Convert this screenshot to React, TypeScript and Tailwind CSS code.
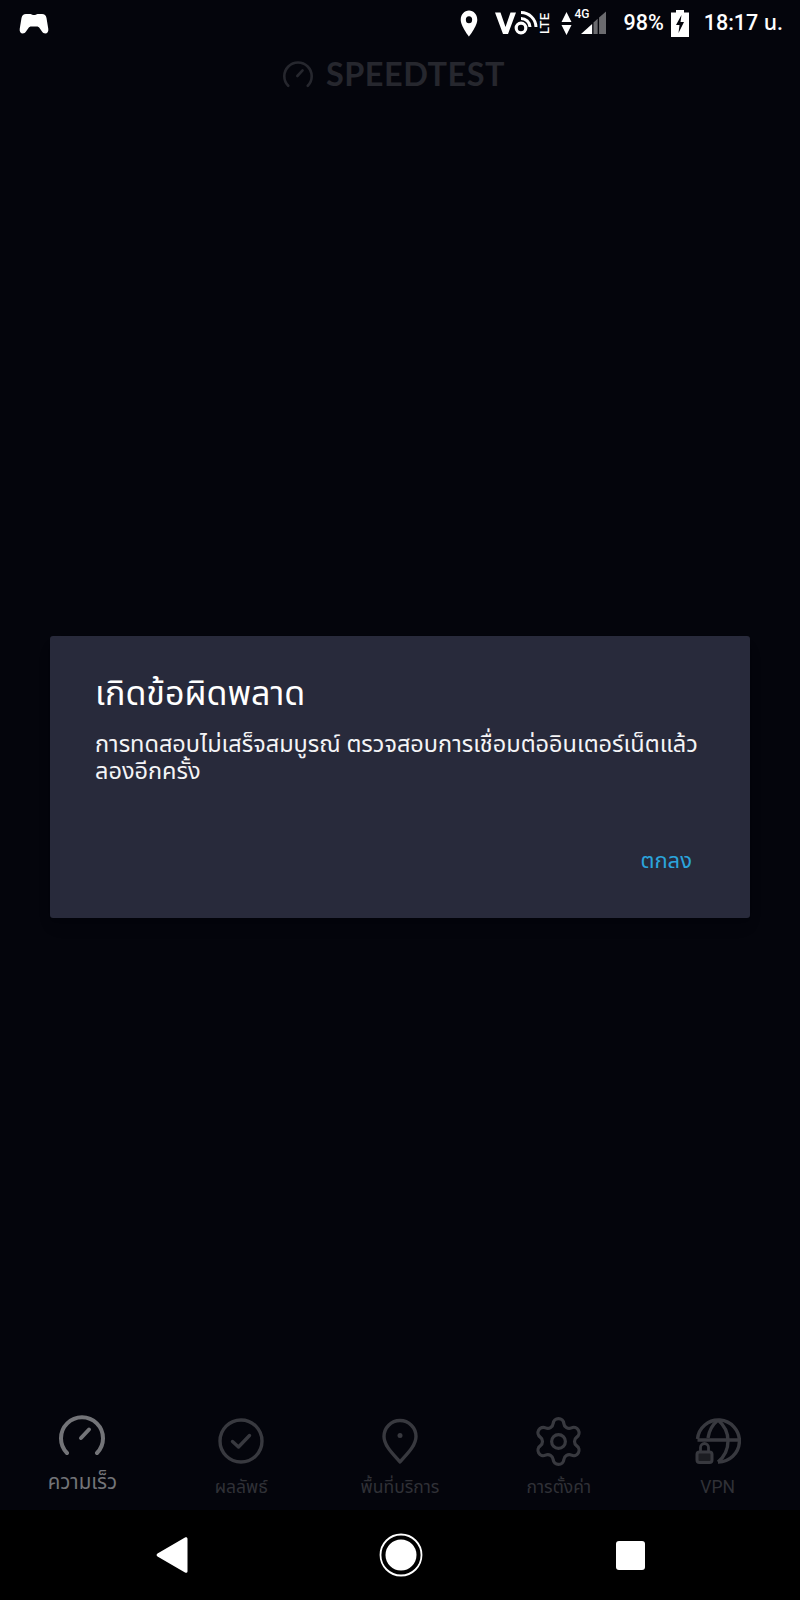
import { Settings } from "lucide-react";

// ===== Speedtest error dialog screen =====
const FONT = "font-['Roboto','Noto_Sans','Noto_Sans_Thai','DejaVu_Sans',sans-serif]";

function GamepadIcon() {
  return (
    <svg width="30" height="21" viewBox="0 0 30 21" fill="#fff">
      <path d="M7 1h4.500c1 0 1.500 1 2.500 1h2c1 0 1.500-1 2.500-1H23c2.500 0 4 1.500 4.500 4l1.800 11c.4 2.500-1 4.500-3 4.500-1.500 0-2.500-.8-3.500-2.200L20.500 15c-.7-1-1.500-1.500-2.800-1.500h-5.400c-1.300 0-2.100.5-2.800 1.500l-2.300 3.300c-1 1.400-2 2.200-3.500 2.200-2 0-3.400-2-3-4.500L2.500 5C3 2.500 4.500 1 7 1z" />
    </svg>
  );
}

function StatusIcons() {
  return (
    <>
      {/* Location pin */}
      <svg width="18" height="27" viewBox="0 0 20 27" preserveAspectRatio="none" className="mr-[17px]">
        <path
          fillRule="evenodd"
          fill="#fff"
          d="M10 0.500C4.800 0.500 0.800 4.500 0.800 9.700 0.800 16 10 26.500 10 26.500S19.200 16 19.200 9.700C19.200 4.500 15.200 0.500 10 0.500zM10 6.200a3.500 3.500 0 1 1 0 7 3.500 3.500 0 0 1 0-7z"
        />
      </svg>

      {/* VoLTE */}
      <svg width="60" height="30" viewBox="0 -3 60 30" className="mr-[6px]">
        <path d="M0 1.500h5.500L10.500 16l5-14.500H21L13 23H8z" fill="#fff" />
        <circle cx="26" cy="17" r="4.800" fill="none" stroke="#fff" strokeWidth="3.200" />
        <path
          d="M26 1.500A15 15 0 0 1 41 16M26 7.500A9 9 0 0 1 35 16"
          fill="none"
          stroke="#fff"
          strokeWidth="3"
        />
        <text
          transform="translate(54 23) rotate(-90)"
          fontSize="13"
          fontWeight="500"
          fill="#fff"
          textLength="21"
        >
          LTE
        </text>
      </svg>

      {/* Data arrows */}
      <svg width="11" height="25" viewBox="0 0 11 25" className="mr-[9px]">
        <path d="M5.500 1L10.500 11H0.500z M0.500 14H10.500L5.500 24z" fill="#fff" />
      </svg>

      {/* Signal with 4G */}
      <div className="relative mr-[17px] h-[26px] w-[25px]">
        <svg width="25" height="26" viewBox="0 0 27 26" className="absolute left-0 top-0">
          <path d="M0 25L12 14V25z" fill="#fff" />
          <path d="M13.500 12.500L18 8.500V25H13.500z" fill="#6b6b6f" />
          <path d="M19.500 7L27 0.500V25H19.500z" fill="#6b6b6f" />
        </svg>
        <span className="absolute left-[-7px] top-[-2px] text-[12px] font-medium leading-none text-white">
          4G
        </span>
      </div>

      <span className="mr-[7px] text-[21.5px] font-medium leading-none text-white">98%</span>

      {/* Battery charging */}
      <svg width="18" height="27" viewBox="0 0 18 27" className="mr-[15px]">
        <path
          fillRule="evenodd"
          fill="#fff"
          d="M5 0h8v2.500h5V27H0V2.500h5zM10.500 5L5 15h3.500L7.500 23l5.500-11H9.500z"
        />
      </svg>

      <span className="text-[21.5px] font-medium leading-none text-white">18:17 น.</span>
    </>
  );
}

function SpeedIcon({ size, stroke }: { size: number; stroke: string }) {
  return (
    <svg
      width={size}
      height={(size * 42) / 46}
      viewBox="0 0 46 42"
      fill="none"
      stroke={stroke}
      strokeWidth="4"
      strokeLinecap="round"
    >
      <path d="M8 38A21 21 0 1 1 38 38" />
      <path d="M22 23L30 14.500" />
    </svg>
  );
}

const TAB_STROKE = "#38393f";

const tabs = [
  {
    label: "ความเร็ว",
    active: true,
    icon: <SpeedIcon size={46} stroke="#737478" />,
  },
  {
    label: "ผลลัพธ์",
    active: false,
    icon: (
      <svg width="46" height="46" viewBox="0 0 46 46" fill="none" stroke={TAB_STROKE} strokeWidth="3.400" strokeLinecap="round" strokeLinejoin="round">
        <circle cx="23" cy="23" r="21" />
        <path d="M14.500 23.500L20.500 29L31.500 17.500" />
      </svg>
    ),
  },
  {
    label: "พื้นที่บริการ",
    active: false,
    icon: (
      <svg width="36" height="46" viewBox="0 0 36 46" fill="none" stroke={TAB_STROKE} strokeWidth="3.400" strokeLinejoin="round">
        <path d="M18 44C12 37 2 28 2 18.500a16 16 0 0 1 32 0C34 28 24 37 18 44z" />
        <circle cx="18" cy="17.500" r="2.500" fill={TAB_STROKE} stroke="none" />
      </svg>
    ),
  },
  {
    label: "การตั้งค่า",
    active: false,
    icon: <Settings size={55} color={TAB_STROKE} strokeWidth={1.4} />,
  },
  {
    label: "VPN",
    active: false,
    icon: (
      <svg width="46" height="46" viewBox="0 0 46 46" fill="none" stroke={TAB_STROKE} strokeWidth="3.400" strokeLinejoin="round">
        <path d="M2.500 21A21 21 0 1 1 23 44" />
        <path d="M2.500 22H44" />
        <path d="M23 2c-6 5-9 11-10 18M23 2c6 5 10 13 10 21s-4 16-10 21" />
        <rect x="2" y="34" width="15" height="10.500" rx="2.500" fill="#1c1d22" strokeWidth="3" />
        <path d="M5.500 34v-4.500a4 4 0 0 1 8 0V34" strokeWidth="2.800" />
      </svg>
    ),
  },
];

export default function App() {
  return (
    <div className={`flex h-[1600px] w-[800px] flex-col overflow-hidden bg-[#04050c] ${FONT}`}>
      {/* Status bar */}
      <div className="flex h-[46px] shrink-0 items-center pl-[19px] pr-[17px]">
        <GamepadIcon />
        <div className="ml-auto flex items-center">
          <StatusIcons />
        </div>
      </div>

      {/* Faded logo */}
      <div className="flex h-[60px] shrink-0 items-center justify-center gap-[13px] pb-[3px] pr-[12px]">
        <SpeedIcon size={30} stroke="#26272e" />
        <span className="font-['Lato',sans-serif] text-[32.5px] font-bold leading-none tracking-[0.5px] text-[#26272e]">
          SPEEDTEST
        </span>
      </div>

      {/* Dialog area */}
      <div className="flex flex-1 items-start px-[50px] pt-[530px]">
        <div className="flex h-[282px] w-[700px] flex-col rounded-[3px] bg-[#282a3b] pl-[45px] pr-[50px] pt-[34px] shadow-lg">
          <h1 className="text-[34px] leading-[46px] text-white">เกิดข้อผิดพลาด</h1>
          <p className="mt-[15px] text-[23.5px] leading-[27px] text-[#f4f4f6]">
            การทดสอบไม่เสร็จสมบูรณ์ ตรวจสอบการเชื่อมต่ออินเตอร์เน็ตแล้ว ลองอีกครั้ง
          </p>
          <div className="mt-auto flex justify-end pb-[42px] pr-[8px]">
            <button className="text-[22px] leading-[30px] text-[#2ba4dc]">ตกลง</button>
          </div>
        </div>
      </div>

      {/* Bottom tabs */}
      <div className="grid h-[122px] shrink-0 grid-cols-5 px-[3px]">
        {tabs.map((tab) => (
          <div key={tab.label} className="flex flex-col items-center">
            {tab.active ? (
              <div className="mt-[27px] flex h-[42px] items-center justify-center">{tab.icon}</div>
            ) : (
              <div className="mt-[30px] flex h-[46px] items-center justify-center">{tab.icon}</div>
            )}
            {tab.active ? (
              <span className="mt-[13px] text-[20.5px] leading-[24px] text-[#737478]">{tab.label}</span>
            ) : (
              <span className="mt-[11px] text-[17.5px] leading-[24px] text-[#303137]">{tab.label}</span>
            )}
          </div>
        ))}
      </div>

      {/* Android nav bar */}
      <div className="flex h-[90px] shrink-0 items-center justify-center bg-black">
        <svg width="32" height="38" viewBox="0 0 32 38" fill="#fff" className="mr-[191px]">
          <path d="M29 1.500c1.300-.8 2.500 0 2.500 1.300v32.400c0 1.300-1.200 2.100-2.500 1.300L1.500 20.500c-1.200-.7-1.200-2.300 0-3z" />
        </svg>
        <svg width="44" height="44" viewBox="0 0 44 44" className="mr-[193px]">
          <circle cx="22" cy="22" r="20.500" fill="none" stroke="#fff" strokeWidth="1.800" />
          <circle cx="22" cy="22" r="15.500" fill="#fff" />
        </svg>
        <div className="h-[29px] w-[29px] rounded-[3px] bg-white" />
      </div>
    </div>
  );
}
